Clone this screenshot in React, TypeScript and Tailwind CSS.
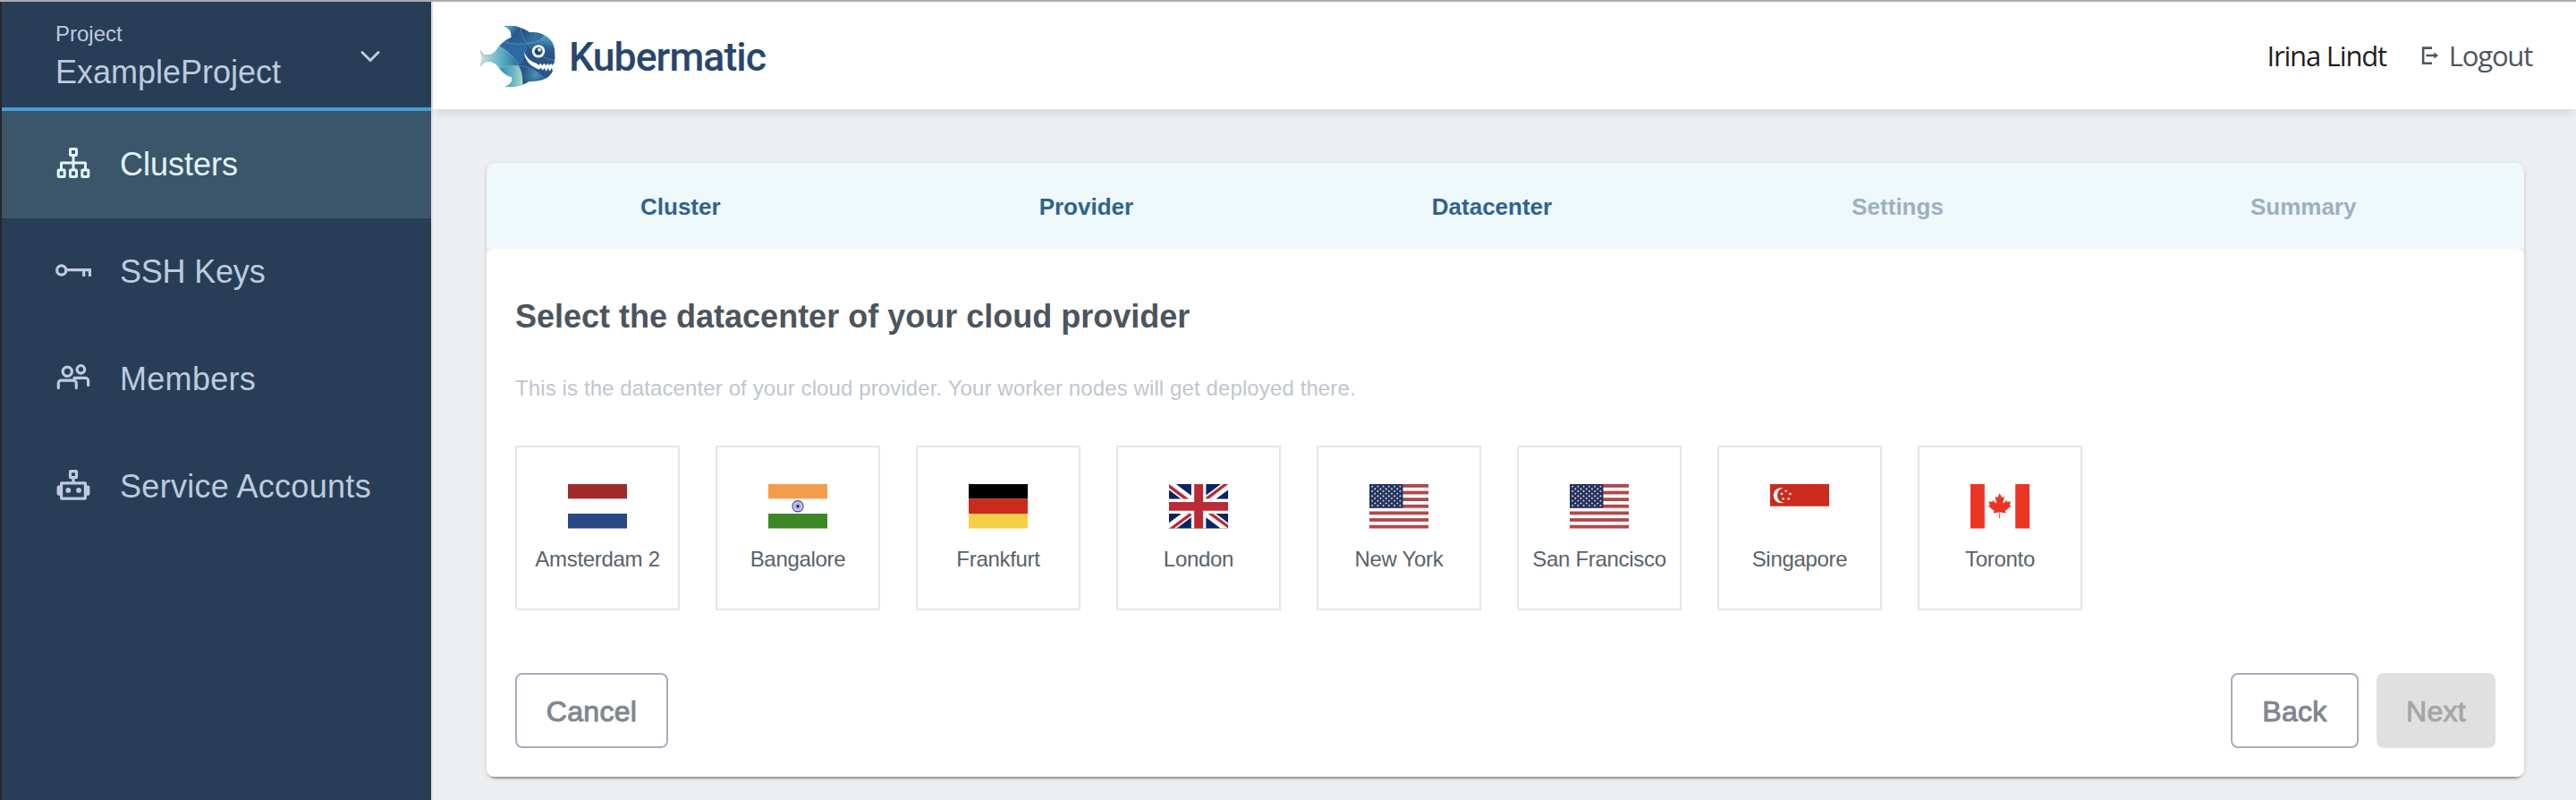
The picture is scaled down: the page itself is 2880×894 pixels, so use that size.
import React from "react";

const SANS = "font-['Liberation_Sans',Arial,sans-serif]";

function ClustersIcon() {
  return (
    <svg width="44" height="44" viewBox="60 162 44 44" fill="none" stroke="currentColor" strokeWidth="3" strokeLinejoin="round" className="shrink-0">
      <rect x="78.5" y="166.5" width="7" height="7" rx="0.6" />
      <rect x="65.2" y="190" width="7" height="7.5" rx="0.6" />
      <rect x="78.5" y="190" width="7" height="7.5" rx="0.6" />
      <rect x="91.8" y="190" width="7" height="7.5" rx="0.6" />
      <path d="M82 174v15M68.5 189v-7h27v7" />
    </svg>
  );
}

function KeyIcon() {
  return (
    <svg width="44" height="44" viewBox="60 282 44 44" fill="none" stroke="currentColor" strokeWidth="3.2" className="shrink-0">
      <circle cx="68.7" cy="302" r="5.1" />
      <path d="M74 301.6h28M93.7 301.6v7.4M100.4 301.6v7.4" />
    </svg>
  );
}

function MembersIcon() {
  return (
    <svg width="44" height="44" viewBox="60 402 44 44" fill="none" stroke="currentColor" strokeWidth="3.2" strokeLinecap="round" className="shrink-0">
      <circle cx="75.3" cy="415.3" r="5.1" />
      <circle cx="90.4" cy="412.8" r="4.3" />
      <path d="M65.3 433.6v-5.4a3 3 0 0 1 3-3h14a3 3 0 0 1 3 3v5.4" />
      <path d="M83 422.4h12.6a3 3 0 0 1 3 3v5" />
    </svg>
  );
}

function RobotIcon() {
  return (
    <svg width="44" height="44" viewBox="60 522 44 44" fill="none" stroke="currentColor" strokeWidth="3.2" strokeLinejoin="round" className="shrink-0">
      <rect x="78.5" y="526.7" width="7" height="7" rx="0.6" />
      <path d="M82 534v5" />
      <rect x="68.6" y="539.8" width="26.8" height="17.4" rx="0.4" />
      <circle cx="76.3" cy="547.9" r="2.9" fill="currentColor" stroke="none" />
      <circle cx="88" cy="547.9" r="2.9" fill="currentColor" stroke="none" />
      <path d="M68 542.6h-2.4a2 2 0 0 0-2 2v7.2a2 2 0 0 0 2 2H68zM96 542.6h2.4a2 2 0 0 1 2 2v7.2a2 2 0 0 1-2 2H96z" fill="currentColor" stroke="none" />
    </svg>
  );
}

function FishLogo() {
  return (
    <svg width="86" height="71" viewBox="45 80 258 213" className="shrink-0">
      <defs>
        <linearGradient id="tail" x1="48" y1="0" x2="178" y2="0" gradientUnits="userSpaceOnUse">
          <stop offset="0" stopColor="#c9e4d5" />
          <stop offset="0.5" stopColor="#62b4c6" />
          <stop offset="1" stopColor="#2b6c9f" />
        </linearGradient>
        <linearGradient id="fin" x1="130" y1="90" x2="185" y2="130" gradientUnits="userSpaceOnUse">
          <stop offset="0" stopColor="#58b1c6" />
          <stop offset="0.6" stopColor="#29598e" />
          <stop offset="1" stopColor="#2a6299" />
        </linearGradient>
        <linearGradient id="brow" x1="190" y1="100" x2="255" y2="140" gradientUnits="userSpaceOnUse">
          <stop offset="0" stopColor="#234f86" />
          <stop offset="0.6" stopColor="#3273a4" />
          <stop offset="1" stopColor="#2f6c9d" />
        </linearGradient>
        <linearGradient id="head" x1="270" y1="118" x2="262" y2="200" gradientUnits="userSpaceOnUse">
          <stop offset="0" stopColor="#54a9bf" />
          <stop offset="0.5" stopColor="#2b6293" />
          <stop offset="1" stopColor="#264a7c" />
        </linearGradient>
        <linearGradient id="belly" x1="118" y1="250" x2="192" y2="250" gradientUnits="userSpaceOnUse">
          <stop offset="0" stopColor="#3f94b6" />
          <stop offset="0.5" stopColor="#60b3c6" />
          <stop offset="1" stopColor="#b5dacb" />
        </linearGradient>
        <radialGradient id="jaw" cx="232" cy="250" r="44" gradientUnits="userSpaceOnUse">
          <stop offset="0" stopColor="#4894b4" />
          <stop offset="1" stopColor="#265088" />
        </radialGradient>
        <clipPath id="fish">
          <path d="M49 167C57 189 88 193 108 158C120 141 135 131 152 124C153 104 143 92 127 87C158 82 188 91 212 107C235 107 252 110 264 118C288 131 300 150 298 196L290 238C284 250 276 258 264 263C250 270 232 271 212 272C190 284 165 293 130 290C148 284 157 273 154 258C137 252 122 243 113 229C96 200 63 199 50 220C47 212 54 203 54 193C54 184 47 177 49 167Z" />
        </clipPath>
      </defs>
      <g clipPath="url(#fish)">
        <rect x="45" y="80" width="258" height="214" fill="#2d6aa1" />
        <path d="M40 150H108C140 170 165 190 176 222L112 232L40 240Z" fill="url(#tail)" />
        <path d="M120 80H183C186 110 190 128 206 145C180 148 150 147 128 137Z" fill="url(#fin)" />
        <path d="M183 80H270V118C250 135 230 143 206 145C190 128 186 110 183 90Z" fill="url(#brow)" />
        <path d="M266 116H303V200C265 200 228 178 206 145C232 142 250 134 266 116Z" fill="url(#head)" />
        <path d="M206 145C228 178 265 200 303 200V262H264C235 235 208 222 176 220C195 205 205 185 206 145Z" fill="#28558b" />
        <path d="M110 230C130 219 155 217 177 220C188 240 191 260 190 295H110Z" fill="url(#belly)" />
        <path d="M177 220C215 222 240 238 266 265L250 295H190C191 260 188 240 177 220Z" fill="url(#jaw)" />
        <g fill="none" stroke="#a7cddb" strokeOpacity="0.65" strokeWidth="1.6">
          <path d="M108 156C140 170 165 190 176 220M128 137C150 147 180 148 206 145C232 142 250 134 266 116M183 90C186 110 190 128 206 145C228 178 262 198 300 200M112 230C130 219 155 217 177 220C215 222 240 238 266 265M177 220C188 240 191 260 190 290" />
        </g>
      </g>
      <path d="M195 174C206 197 220 207 236 211L244 217L250 211L256 219L262 211L268 219L274 211L279 219L285 211L289 218L297 208L291 237L287 227L281 238L275 227L269 238L263 227L257 235L251 226L246 232C222 225 198 207 195 174Z" fill="#fff" />
      <circle cx="243" cy="171" r="21.5" fill="#fff" />
      <circle cx="243" cy="171" r="13.5" fill="#285487" />
      <circle cx="240" cy="172" r="7" fill="#1c3b68" />
      <circle cx="246" cy="166" r="5.5" fill="#fff" />
    </svg>
  );
}

const LEAF =
  "M4890 4430l-45-863a95 95 0 0 1 111-98l859 151-116-320a65 65 0 0 1 20-73l941-762-212-99a65 65 0 0 1-34-79l186-572-542 115a65 65 0 0 1-73-38l-105-247-423 454a65 65 0 0 1-111-57l204-1052-327 189a65 65 0 0 1-91-27l-332-652-332 652a65 65 0 0 1-91 27l-327-189 204 1052a65 65 0 0 1-111 57l-423-454-105 247a65 65 0 0 1-73 38l-542-115 186 572a65 65 0 0 1-34 79l-212 99 941 762a65 65 0 0 1 20 73l-116 320 859-151a95 95 0 0 1 111 98l-45 863z";

function starPoints(cx: number, cy: number, r: number) {
  return Array.from({ length: 10 }, (_, i) => {
    const a = -Math.PI / 2 + (i * Math.PI) / 5;
    const d = i % 2 ? r * 0.42 : r;
    return `${(cx + d * Math.cos(a)).toFixed(2)},${(cy + d * Math.sin(a)).toFixed(2)}`;
  }).join(" ");
}

function Bands({ colors }: { colors: string[] }) {
  return (
    <>
      {colors.map((c, i) => (
        <rect key={i} y={i * 16.5} width="66" height="16.5" fill={c} />
      ))}
    </>
  );
}

function UsFlag() {
  const stripe = 49.5 / 13;
  const stars: React.ReactNode[] = [];
  for (let row = 0; row < 9; row++) {
    const count = row % 2 ? 5 : 6;
    for (let i = 0; i < count; i++) {
      const cx = (row % 2 ? 6.25 : 3.12) + i * 6.25;
      stars.push(<polygon key={`${row}-${i}`} points={starPoints(cx, 2.67 * (row + 1), 1.4)} fill="#fff" />);
    }
  }
  return (
    <>
      {[0, 2, 4, 6, 8, 10, 12].map((i) => (
        <rect key={i} y={i * stripe} width="66" height={stripe} fill="#b04848" />
      ))}
      <rect width="37.5" height={stripe * 7} fill="#25345f" />
      {stars}
    </>
  );
}

const FLAGS: Record<string, React.ReactNode> = {
  nl: <Bands colors={["#a0292c", "#ffffff", "#294685"]} />,
  de: <Bands colors={["#000000", "#cb2a1d", "#f7ce46"]} />,
  in: (
    <>
      <Bands colors={["#f39c4b", "#ffffff", "#3e8727"]} />
      <g stroke="#3b3c9e" fill="none">
        <circle cx="33" cy="24.75" r="6.1" strokeWidth="1.1" />
        {Array.from({ length: 12 }, (_, i) => (
          <path key={i} d="M27.4 24.75h11.2" strokeWidth="0.35" transform={`rotate(${i * 15} 33 24.75)`} />
        ))}
        <circle cx="33" cy="24.75" r="1.2" fill="#14147c" stroke="none" />
      </g>
    </>
  ),
  gb: (
    <g transform="scale(0.103125)">
      <path fill="#0a2365" d="M0 0h640v480H0z" />
      <path fill="#fff" d="M75 0l244 181L562 0h78v62L400 241l240 178v61h-80L320 301 81 480H0v-60l239-178L0 64V0z" />
      <path fill="#ba2b35" d="M424 281l216 159v40L369 281zm-184 20l6 35L54 480H0zM640 0v3L391 191l2-44L590 0zM0 0l239 176h-60L0 42z" />
      <path fill="#fff" d="M241 0v480h160V0zM0 160v160h640V160z" />
      <path fill="#ba2b35" d="M0 193v96h640v-96zM273 0v480h96V0z" />
    </g>
  ),
  us: <UsFlag />,
  sg: (
    <>
      <rect width="66" height="24.75" fill="#cb2a1d" />
      <circle cx="12.4" cy="12.6" r="8.7" fill="#fff" />
      <circle cx="16.4" cy="12.6" r="8.5" fill="#cb2a1d" />
      {[[17.7, 7.7], [22.4, 10.9], [13, 10.9], [14.7, 16.5], [20.7, 16.5]].map(([x, y]) => (
        <polygon key={`${x}-${y}`} points={starPoints(x, y, 2)} fill="#fff" />
      ))}
    </>
  ),
  ca: (
    <>
      <rect width="15.8" height="49.5" fill="#ea3424" />
      <rect x="50.2" width="15.8" height="49.5" fill="#ea3424" />
      <path d={LEAF} fill="#ea3424" transform="translate(32.7 10) scale(0.0069) translate(-4800 -370)" />
    </>
  ),
};

const NAV = [
  { label: "Clusters", icon: <ClustersIcon />, active: true, tracking: "" },
  { label: "SSH Keys", icon: <KeyIcon />, tracking: "tracking-[-0.2px]" },
  { label: "Members", icon: <MembersIcon />, tracking: "tracking-[0.3px]" },
  { label: "Service Accounts", icon: <RobotIcon />, tracking: "tracking-[0.3px]" },
];

const STEPS = [
  { label: "Cluster", done: true },
  { label: "Provider", done: true },
  { label: "Datacenter", done: true },
  { label: "Settings" },
  { label: "Summary" },
];

const DATACENTERS = [
  { name: "Amsterdam 2", flag: "nl" },
  { name: "Bangalore", flag: "in" },
  { name: "Frankfurt", flag: "de" },
  { name: "London", flag: "gb" },
  { name: "New York", flag: "us" },
  { name: "San Francisco", flag: "us" },
  { name: "Singapore", flag: "sg" },
  { name: "Toronto", flag: "ca" },
];

function Sidebar() {
  return (
    <aside className="flex w-[484px] shrink-0 flex-col border-r-2 border-l-2 border-r-[#dfe1e4] border-l-[#24282b] bg-[#283e57] text-[#bccbdf]">
      <div className="flex h-[122px] shrink-0 items-start justify-between border-b-4 border-[#439fd8] pr-[52px] pl-[60px]">
        <div className="pt-[21px]">
          <div className="text-[24px] leading-[30px]">Project</div>
          <div className="mt-[6px] text-[36px] leading-[44px]">ExampleProject</div>
        </div>
        <svg width="32" height="24" viewBox="398 51 32 24" fill="none" stroke="currentColor" strokeWidth="3" strokeLinecap="round" strokeLinejoin="round" className="mt-[49px] shrink-0">
          <path d="M405 58.5l9 9 9-9" />
        </svg>
      </div>
      <nav>
        {NAV.map((item) => (
          <a key={item.label} className={`flex h-[120px] items-center gap-[30px] pl-[58px] ${item.active ? "bg-[#3b566b] text-[#e0f5fc]" : ""}`}>
            {item.icon}
            <span className={`text-[36px] leading-[44px] ${item.tracking}`}>{item.label}</span>
          </a>
        ))}
      </nav>
    </aside>
  );
}

function Header() {
  return (
    <header className="flex h-[120px] shrink-0 items-center justify-between bg-white pr-[49px] pl-[52px] shadow-[0_6px_12px_-3px_rgba(0,0,0,0.12)]">
      <div className="flex items-center gap-[14px]">
        <FishLogo />
        <span className="pt-[4px] font-[Roboto,sans-serif] text-[44.5px] leading-[52px] font-medium tracking-[-0.9px] text-[#27466f]">Kubermatic</span>
      </div>
      <div className="flex items-center font-['Open_Sans',sans-serif] text-[31px] leading-[42px] tracking-[-1.2px]">
        <span className="text-[#1f1f1f]">Irina Lindt</span>
        <a className="ml-[38px] flex items-center gap-[10px] text-[#4d565f]">
          <svg width="22" height="24" viewBox="2706 50 22 24" fill="none" stroke="currentColor" strokeWidth="2.6">
            <path d="M2719 53.6h-9.9v17.1h9.9M2712.4 62h10" />
            <path d="M2721.3 58.4l4.8 3.6-4.8 3.6z" fill="currentColor" stroke="none" />
          </svg>
          <span>Logout</span>
        </a>
      </div>
    </header>
  );
}

function Wizard() {
  return (
    <section className="rounded-[10px] bg-[#edeef0] shadow-[0_4px_2px_-2px_rgba(0,0,0,0.2),0_2px_2px_rgba(0,0,0,0.14),0_2px_6px_rgba(0,0,0,0.12)]">
      <div className="grid h-[96px] grid-cols-[443.6px_453.6px_453.6px_453.6px_453.6px] items-center rounded-t-[10px] bg-[#eff8fb] pt-[2px]">
        {STEPS.map((s) => (
          <div key={s.label} className={`text-center text-[26px] leading-[32px] font-bold first:pr-[10px] ${s.done ? "text-[#2e638f]" : "text-[#9cb0c2]"}`}>
            {s.label}
          </div>
        ))}
      </div>
      <div className="rounded-[8px] bg-white px-[32px] pt-[54px] pb-[32px]">
        <h1 className="text-[36px] leading-[44px] font-bold text-[#4c555d]">Select the datacenter of your cloud provider</h1>
        <p className="mt-[43px] text-[24px] leading-[30px] tracking-[0.11px] text-[#bfc5d1]">
          This is the datacenter of your cloud provider. Your worker nodes will get deployed there.
        </p>
        <div className="mt-[49px] flex gap-[40px]">
          {DATACENTERS.map((d) => (
            <button key={d.name} className="flex h-[184px] w-[184px] shrink-0 flex-col items-center border-2 border-[#e3e6ea] bg-white pt-[41px] first:rounded-bl-[4px]">
              <svg width="66" height="50" viewBox="0 0 66 50" className="shrink-0">{FLAGS[d.flag]}</svg>
              <span className="mt-[19px] text-[24px] leading-[30px] tracking-[-0.3px] whitespace-nowrap text-[#59626b]">{d.name}</span>
            </button>
          ))}
        </div>
        <div className="mt-[70px] flex h-[84px] gap-[20px] text-[32px] leading-[40px] tracking-[0.3px] text-[#80878f] [-webkit-text-stroke:1px_currentColor]">
          <button className="mr-auto w-[171px] rounded-[8px] border-2 border-[#a6adba] pt-[2px]">Cancel</button>
          <button className="w-[143px] rounded-[8px] border-2 border-[#a6adba] pt-[2px]">Back</button>
          <button className="w-[133px] rounded-[8px] bg-[#e0e0e0] pt-[2px] text-[#a6a6a6]">Next</button>
        </div>
      </div>
    </section>
  );
}

export default function App() {
  return (
    <div className={`flex h-[894px] w-[2880px] flex-col overflow-hidden border-t-2 border-[#acacac] bg-[#edeef0] ${SANS}`}>
      <div className="flex min-h-0 flex-1">
        <Sidebar />
        <div className="flex min-w-0 flex-1 flex-col">
          <Header />
          <main className="pt-[60px] pr-[58px] pl-[60px]">
            <Wizard />
          </main>
        </div>
      </div>
    </div>
  );
}
